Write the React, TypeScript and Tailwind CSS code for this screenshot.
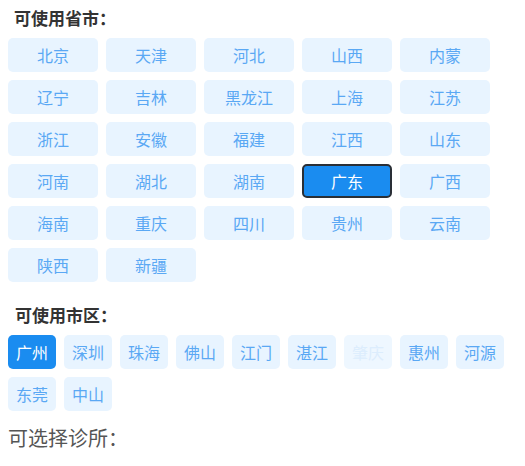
import React from "react";

const provinces = [
  "北京", "天津", "河北", "山西", "内蒙",
  "辽宁", "吉林", "黑龙江", "上海", "江苏",
  "浙江", "安徽", "福建", "江西", "山东",
  "河南", "湖北", "湖南", "广东", "广西",
  "海南", "重庆", "四川", "贵州", "云南",
  "陕西", "新疆",
];

const cities = ["广州", "深圳", "珠海", "佛山", "江门", "湛江", "肇庆", "惠州", "河源", "东莞", "中山"];

export default function App() {
  return (
    <div
      className="w-[525px] h-[466px] bg-white pt-[6px] pl-[8px]"
      style={{ fontFamily: '"Noto Sans CJK SC", "Noto Sans", sans-serif' }}
    >
      <div className="h-6 leading-6 pl-[6px] text-[17px] font-bold text-[#333333]">可使用省市：</div>
      <div className="mt-2 grid grid-cols-[repeat(5,90px)] gap-2">
        {provinces.map((p) => {
          const sel = p === "广东";
          return (
            <div
              key={p}
              className={
                sel
                  ? "h-[34px] rounded-[5px] bg-[#1a8cf0] border-2 border-[#2a2f36] text-white text-[16px] flex items-center justify-center"
                  : "h-[34px] rounded-[5px] bg-[#e8f4ff] text-[#5aa8f4] text-[16px] flex items-center justify-center"
              }
            >
              {p}
            </div>
          );
        })}
      </div>
      <div className="mt-[21px] h-6 leading-6 pl-[7px] text-[17px] font-bold text-[#333333]">可使用市区：</div>
      <div className="mt-2 grid grid-cols-[repeat(9,48px)] gap-2">
        {cities.map((c) => {
          const sel = c === "广州";
          const dis = c === "肇庆";
          return (
            <div
              key={c}
              className={
                sel
                  ? "h-[34px] rounded-[5px] bg-[#1a8cf0] text-white text-[16px] flex items-center justify-center"
                  : dis
                  ? "h-[34px] rounded-[5px] bg-[#eef7ff] text-[#dcedfd] text-[16px] flex items-center justify-center"
                  : "h-[34px] rounded-[5px] bg-[#e8f4ff] text-[#5aa8f4] text-[16px] flex items-center justify-center"
              }
            >
              {c}
            </div>
          );
        })}
      </div>
      <div className="mt-[13px] h-[28px] leading-[28px] text-[20px] text-[#555555]">可选择诊所：</div>
    </div>
  );
}
